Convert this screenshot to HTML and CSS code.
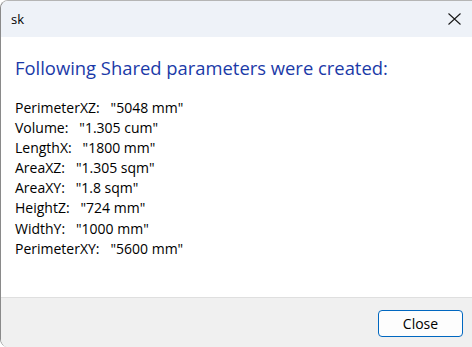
FILE: index.html
```html
<!DOCTYPE html>
<html lang="en">
<head>
    <meta charset="UTF-8">
    <title>sk</title>
    <link rel="stylesheet" href="styles.css">
</head>
<body>
    <div class="window">
        <div class="titlebar">
            <span class="title">sk</span>
            <span class="close-x">
                <svg width="13" height="12" viewBox="0 0 13 12"><path d="M0.5 0.5L12.5 11.5M12.5 0.5L0.5 11.5" stroke="#1a1a1a" stroke-width="1.1"/></svg>
            </span>
        </div>
        <div class="content">
            <h1>Following Shared parameters were created:</h1>
            <ul class="params">
                <li>PerimeterXZ:&nbsp;&nbsp; "5048 mm"</li>
                <li>Volume:&nbsp;&nbsp; "1.305 cum"</li>
                <li>LengthX:&nbsp;&nbsp; "1800 mm"</li>
                <li>AreaXZ:&nbsp;&nbsp; "1.305 sqm"</li>
                <li>AreaXY:&nbsp;&nbsp; "1.8 sqm"</li>
                <li>HeightZ:&nbsp;&nbsp; "724 mm"</li>
                <li>WidthY:&nbsp;&nbsp; "1000 mm"</li>
                <li>PerimeterXY:&nbsp;&nbsp; "5600 mm"</li>
            </ul>
        </div>
        <div class="footer">
            <button class="close-btn">Close</button>
        </div>
    </div>
</body>
</html>
```

FILE: styles.css
```css
html, body {
    margin: 0;
    padding: 0;
    background: #fff;
    font-family: "Open Sans", "Noto Sans", sans-serif;
}

.window {
    width: 471px;
    height: 346px;
    border-left: 1px solid #8a8a8a;
    border-top: 1px solid #b5b5b5;
    border-top-left-radius: 8px;
    border-bottom-left-radius: 8px;
    overflow: hidden;
    display: flex;
    flex-direction: column;
}

.titlebar {
    height: 36px;
    background: #eef2f8;
    display: flex;
    align-items: center;
    justify-content: space-between;
    padding: 0 0 0 10px;
}

.title {
    font-size: 13px;
    color: #000;
}

.close-x {
    width: 35px;
    height: 36px;
    display: flex;
    align-items: center;
    justify-content: center;
}

.content {
    flex: 1;
    background: #fff;
    padding: 19px 14px 0;
}

h1 {
    margin: 0 0 18px;
    font-size: 18.4px;
    line-height: 24px;
    font-weight: normal;
    color: #1b3aa8;
}

.params {
    list-style: none;
    margin: 0;
    padding: 0;
}

.params li {
    font-size: 14px;
    line-height: 20.1px;
    color: #000;
}

.footer {
    height: 49px;
    background: #f0f0f0;
    border-top: 1px solid #dfdfdf;
    display: flex;
    align-items: center;
    justify-content: flex-end;
    padding-right: 9px;
}

.close-btn {
    width: 85px;
    height: 27px;
    margin-top: 1px;
    border: 1px solid #0067c0;
    border-radius: 4px;
    background: #fdfdfd;
    font-family: "Open Sans", "Noto Sans", sans-serif;
    font-size: 14px;
    color: #000;
}
```
